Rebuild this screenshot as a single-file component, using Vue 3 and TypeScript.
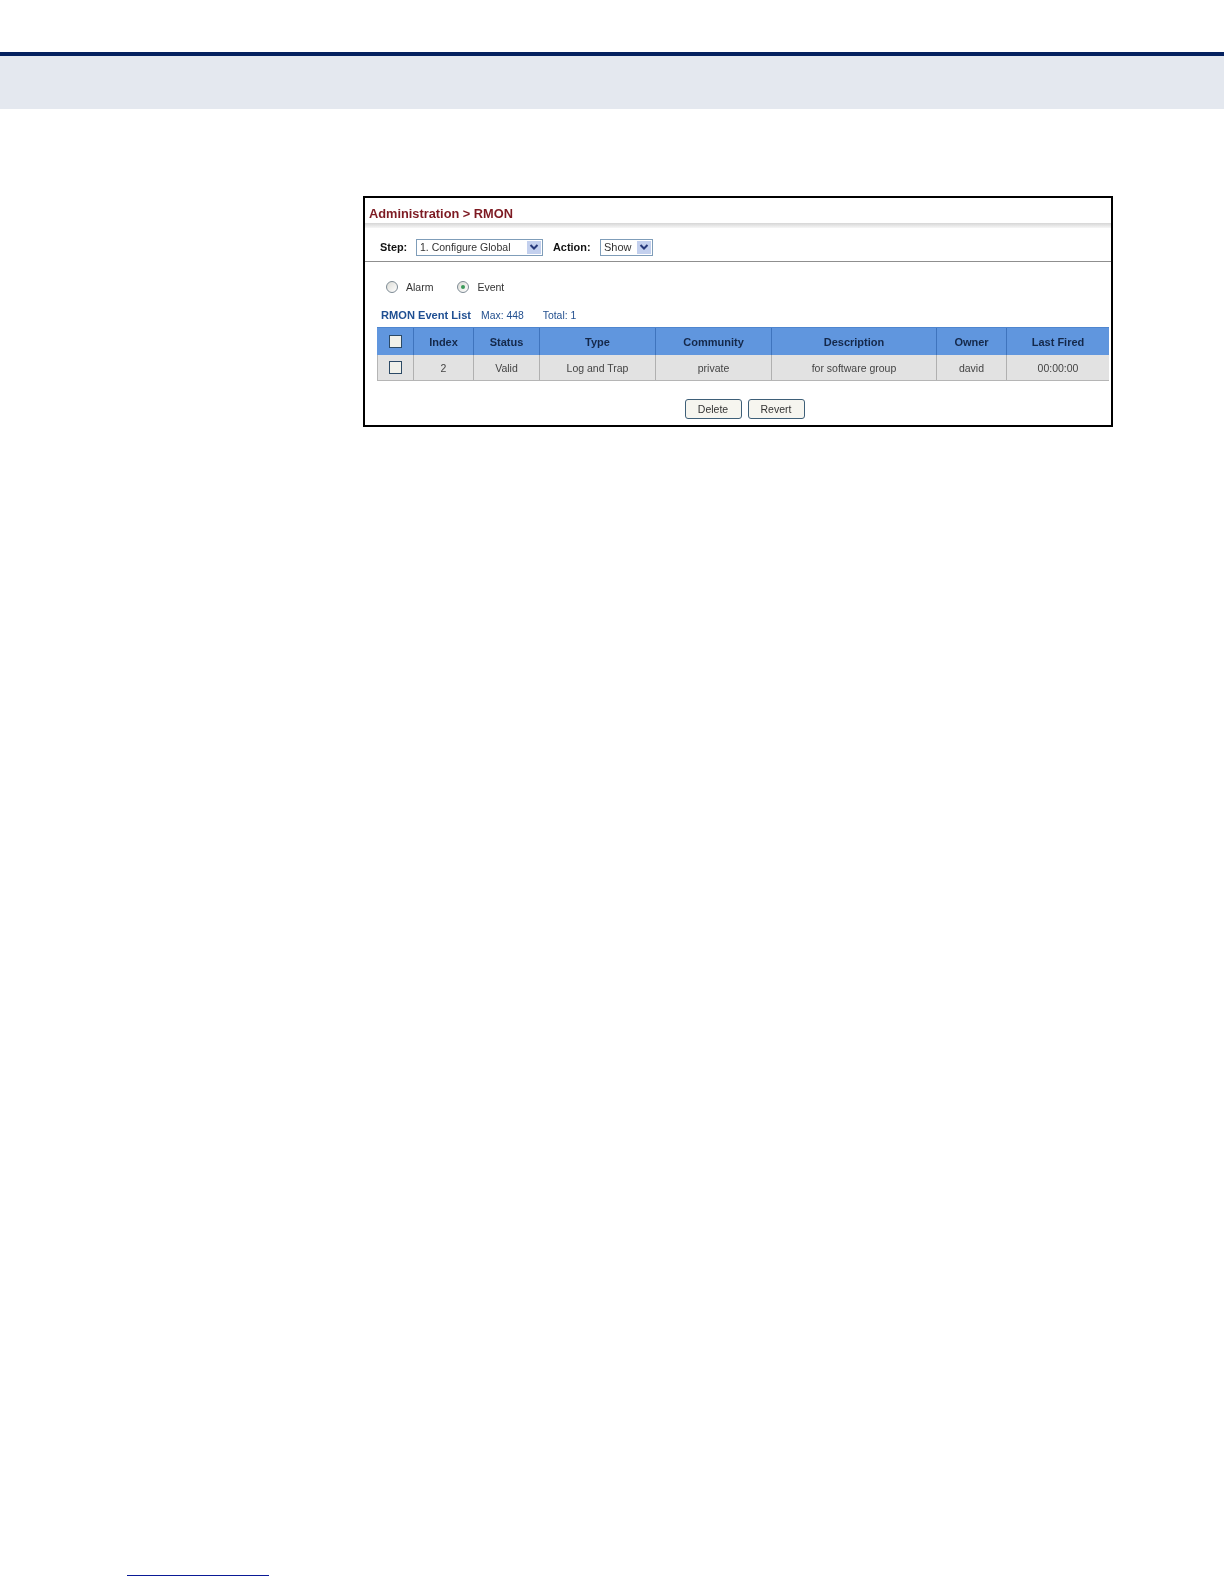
<script setup lang="ts">
const columns = [
  { label: 'Index', value: '2', width: 60 },
  { label: 'Status', value: 'Valid', width: 66 },
  { label: 'Type', value: 'Log and Trap', width: 116 },
  { label: 'Community', value: 'private', width: 116 },
  { label: 'Description', value: 'for software group', width: 165 },
  { label: 'Owner', value: 'david', width: 70 },
  { label: 'Last Fired', value: '00:00:00', width: 102 },
]
</script>

<template>
  <div class="page">
    <div class="top-rule"></div>
    <div class="top-band"></div>

    <div class="frame">
      <h1 class="title">Administration &gt; RMON</h1>
      <div class="title-shade"></div>

      <div class="toolbar">
        <span class="field-label step-label">Step:</span>
        <div class="select select-step">
          <span>1. Configure Global</span>
          <span class="arrow">
            <svg width="10" height="8" viewBox="0 0 10 8"><path d="M1.5 2 L5 5.5 L8.5 2" fill="none" stroke="#27397a" stroke-width="2" /></svg>
          </span>
        </div>
        <span class="field-label action-label">Action:</span>
        <div class="select select-action">
          <span>Show</span>
          <span class="arrow">
            <svg width="10" height="8" viewBox="0 0 10 8"><path d="M1.5 2 L5 5.5 L8.5 2" fill="none" stroke="#27397a" stroke-width="2" /></svg>
          </span>
        </div>
      </div>

      <div class="radios">
        <label class="radio-item">
          <span class="radio"></span>
          <span>Alarm</span>
        </label>
        <label class="radio-item">
          <span class="radio radio-on"><span class="dot"></span></span>
          <span>Event</span>
        </label>
      </div>

      <div class="list-head">
        <strong>RMON Event List</strong>
        <span class="max">Max: 448</span>
        <span>Total: 1</span>
      </div>

      <div class="table">
        <div class="row row-head">
          <div class="cell cell-check"><span class="check"></span></div>
          <div v-for="col in columns" :key="col.label" class="cell" :style="{ width: col.width + 'px' }">
            {{ col.label }}
          </div>
        </div>
        <div class="row row-body">
          <div class="cell cell-check"><span class="check"></span></div>
          <div v-for="col in columns" :key="col.label" class="cell" :style="{ width: col.width + 'px' }">
            {{ col.value }}
          </div>
        </div>
      </div>

      <div class="actions">
        <button class="btn" type="button">Delete</button>
        <button class="btn" type="button">Revert</button>
      </div>
    </div>

    <div class="foot-rule"></div>
  </div>
</template>

<style scoped>
.page {
  width: 1224px;
  height: 1584px;
  display: flex;
  flex-direction: column;
  padding-top: 52px;
  box-sizing: border-box;
  background: #fff;
  font-family: "Liberation Sans", Arial, sans-serif;
  overflow: hidden;
}
.top-rule {
  height: 4px;
  background: #04215f;
}
.top-band {
  height: 53px;
  background: #e4e8ef;
}
.frame {
  width: 750px;
  height: 231px;
  margin: 87px 0 0 363px;
  box-sizing: border-box;
  border: 2px solid #000;
  display: flex;
  flex-direction: column;
}
.frame > * {
  filter: blur(0.3px);
}
.title {
  margin: 8px 0 0 4px;
  font-size: 12.8px;
  line-height: 15px;
  font-weight: bold;
  color: #7d1a22;
}
.title-shade {
  height: 5px;
  margin-top: 2px;
  background: linear-gradient(#d6d6d6, #f6f6f6);
}
.toolbar {
  display: flex;
  align-items: center;
  height: 34px;
  padding-top: 5px;
  box-sizing: border-box;
  border-bottom: 1px solid #8f8f8f;
  font-size: 10.5px;
  color: #111;
}
.field-label {
  font-size: 10.9px;
  font-weight: bold;
}
.step-label {
  margin-left: 15px;
  width: 36px;
}
.action-label {
  margin-left: 10px;
  width: 47px;
}
.select {
  height: 17px;
  box-sizing: border-box;
  border: 1px solid #7f9db9;
  background: #fff;
  display: flex;
  align-items: center;
  justify-content: space-between;
  padding: 0 1px 0 3px;
  color: #333;
}
.select-step {
  width: 127px;
}
.select-action {
  width: 53px;
  font-size: 11px;
}
.arrow {
  width: 14px;
  height: 13px;
  background: #c3d0ee;
  display: flex;
  align-items: center;
  justify-content: center;
}
.radios {
  display: flex;
  gap: 24px;
  margin: 18px 0 0 21px;
  font-size: 10.5px;
  color: #333;
}
.radio-item {
  display: flex;
  align-items: center;
  gap: 8px;
  height: 14px;
}
.radio {
  width: 12px;
  height: 12px;
  box-sizing: border-box;
  border: 1px solid #7d8a94;
  border-radius: 50%;
  background: linear-gradient(135deg, #dcdcd6, #fff);
  display: flex;
  align-items: center;
  justify-content: center;
}
.dot {
  width: 4px;
  height: 4px;
  border-radius: 50%;
  background: #3c9a5a;
}
.list-head {
  display: flex;
  align-items: baseline;
  margin: 14px 0 0 16px;
  font-size: 10.4px;
  line-height: 14px;
  color: #23508f;
}
.list-head strong {
  font-size: 11.1px;
  margin-right: 10px;
  color: #1f4f92;
}
.max {
  margin-right: 19px;
}
.table {
  width: 732px;
  margin: 4px 0 0 12px;
}
.row {
  display: flex;
}
.row-head {
  height: 28px;
  background: #6096de;
  border-top: 1px solid #4f86cf;
  box-sizing: border-box;
  font-size: 11px;
  font-weight: bold;
  color: #14284a;
}
.row-body {
  height: 26px;
  background: #e2e2e2;
  border-bottom: 1px solid #b5b5b5;
  box-sizing: border-box;
  font-size: 10.5px;
  color: #444;
}
.cell {
  display: flex;
  align-items: center;
  justify-content: center;
  box-sizing: border-box;
  border-right: 1px solid #3f74bd;
}
.row-body .cell {
  border-right-color: #b0b0b0;
}
.cell:last-child {
  border-right: none;
}
.row-body .cell-check {
  border-left: 1px solid #b5b5b5;
}
.cell-check {
  width: 37px;
}
.check {
  width: 13px;
  height: 13px;
  box-sizing: border-box;
  border: 1px solid #2c4a66;
  background: #f1f1ea;
}
.actions {
  display: flex;
  justify-content: center;
  gap: 6px;
  margin-top: 18px;
  padding-left: 13px;
}
.btn {
  width: 57px;
  height: 20px;
  padding: 0;
  box-sizing: border-box;
  border: 1px solid #3e5f78;
  border-radius: 3px;
  background: #f6f5ef;
  font-family: inherit;
  font-size: 10.5px;
  color: #333;
}
.foot-rule {
  width: 142px;
  height: 1px;
  margin: auto 0 8px 127px;
  background: #0a1a96;
}
</style>
